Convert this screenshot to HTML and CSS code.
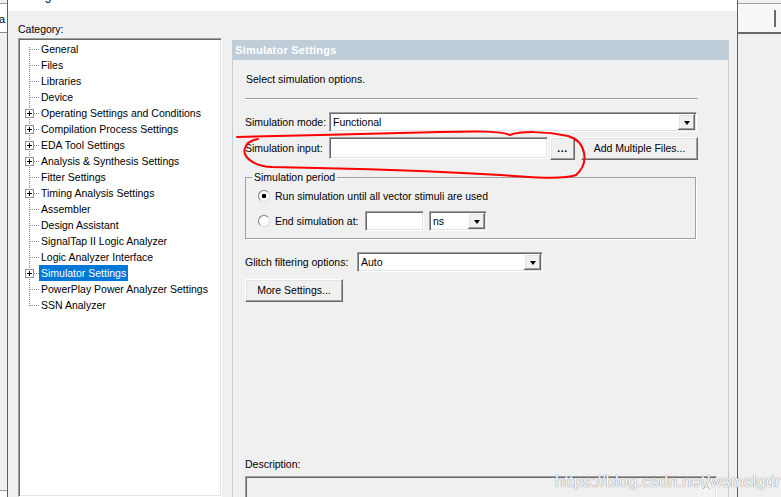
FILE: index.html
```html
<!DOCTYPE html>
<html>
<head>
<meta charset="utf-8">
<link rel="stylesheet" href="styles.css">
</head>
<body>
<div class="screen">
  <div class="edge-left">
    <div class="edge-tab">a</div>
    <div class="edge-fill"></div>
    <div class="edge-foot"></div>
  </div>
  <div class="vrule"></div>
  <div class="dialog">
    <div class="titlebar"><span class="title">Settings</span></div>
    <div class="dialog-body">
      <div class="category">
        <div class="cat-label">Category:</div>
        <ul class="tree">
          <li class="node first"><span class="gut"></span><span class="lbl">General</span></li>
          <li class="node"><span class="gut"></span><span class="lbl">Files</span></li>
          <li class="node"><span class="gut"></span><span class="lbl">Libraries</span></li>
          <li class="node"><span class="gut"></span><span class="lbl">Device</span></li>
          <li class="node"><span class="gut"><span class="plus"></span></span><span class="lbl">Operating Settings and Conditions</span></li>
          <li class="node"><span class="gut"><span class="plus"></span></span><span class="lbl">Compilation Process Settings</span></li>
          <li class="node"><span class="gut"><span class="plus"></span></span><span class="lbl">EDA Tool Settings</span></li>
          <li class="node"><span class="gut"><span class="plus"></span></span><span class="lbl">Analysis &amp; Synthesis Settings</span></li>
          <li class="node"><span class="gut"></span><span class="lbl">Fitter Settings</span></li>
          <li class="node"><span class="gut"><span class="plus"></span></span><span class="lbl">Timing Analysis Settings</span></li>
          <li class="node"><span class="gut"></span><span class="lbl">Assembler</span></li>
          <li class="node"><span class="gut"></span><span class="lbl">Design Assistant</span></li>
          <li class="node"><span class="gut"></span><span class="lbl">SignalTap II Logic Analyzer</span></li>
          <li class="node"><span class="gut"></span><span class="lbl">Logic Analyzer Interface</span></li>
          <li class="node sel"><span class="gut"><span class="plus"></span></span><span class="lbl">Simulator Settings</span></li>
          <li class="node"><span class="gut"></span><span class="lbl">PowerPlay Power Analyzer Settings</span></li>
          <li class="node last"><span class="gut"></span><span class="lbl">SSN Analyzer</span></li>
        </ul>
      </div>
      <div class="panel">
        <div class="panel-head">Simulator Settings</div>
        <div class="panel-body">
          <div class="intro">Select simulation options.</div>
          <div class="sep"></div>
          <div class="row mode-row">
            <span class="field-label">Simulation mode:</span>
            <div class="combo combo-mode"><span class="combo-text">Functional</span><span class="drop"></span></div>
          </div>
          <div class="row input-row">
            <span class="field-label">Simulation input:</span>
            <div class="textbox"></div>
            <div class="btn btn-dots">...</div>
            <div class="btn btn-add">Add Multiple Files...</div>
          </div>
          <fieldset class="period">
            <legend>Simulation period</legend>
            <div class="radio-row">
              <span class="radio checked"></span>
              <span class="radio-label">Run simulation until all vector stimuli are used</span>
            </div>
            <div class="radio-row radio-row2">
              <span class="radio"></span>
              <span class="radio-label end-label">End simulation at:</span>
              <div class="textbox small-input"></div>
              <div class="combo combo-ns"><span class="combo-text">ns</span><span class="drop"></span></div>
            </div>
          </fieldset>
          <div class="row glitch-row">
            <span class="field-label glitch-label">Glitch filtering options:</span>
            <div class="combo combo-glitch"><span class="combo-text">Auto</span><span class="drop"></span></div>
          </div>
          <div class="btn btn-more">More Settings...</div>
          <div class="desc-label">Description:</div>
          <div class="desc-box">
            <div class="desc-text"></div>
            <div class="desc-scroll">
              <svg width="9" height="6" viewBox="0 0 9 6"><path d="M1 5 L4.5 1.5 L8 5" fill="none" stroke="#a8a8a8" stroke-width="1"/></svg>
            </div>
          </div>
        </div>
      </div>
    </div>
  </div>
  <div class="vrule"></div>
  <div class="edge-right">
    <div class="er-tab"><span class="er-bar"></span></div>
    <div class="edge-fill"></div>
  </div>
  <svg class="scribble" width="781" height="497" viewBox="0 0 781 497">
    <path d="M237 137 C300 136 380 133 440 132 C480 131 500 131 510 135 C520 131 545 131 568 136 C586 141 590 163 576 175 C562 180 530 177 500 175 C420 170 330 168 272 167 C252 166 242 156 245 148 C247 142 252 140 258 139" fill="none" stroke="#ff0000" stroke-width="2" stroke-linecap="round"/>
  </svg>
  <div class="watermark">https://blog.csdn.net/wsmslgdr</div>
</div>
</body>
</html>
```
FILE: styles.css
```css
html, body {
  margin: 0;
  padding: 0;
  overflow: hidden;
}
body {
  width: 781px;
  height: 497px;
  background: #f0f0f0;
  color: #000;
  font-family: "Liberation Sans", Arial, sans-serif;
  font-size: 10.5px;
}
.screen {
  position: relative;
  display: flex;
  height: 497px;
  overflow: hidden;
}
.edge-left {
  width: 7px;
  display: flex;
  flex-direction: column;
  background: #f0f0f0;
}
.edge-tab {
  margin-top: 3px;
  height: 28px;
  line-height: 30px;
  background: #fff;
  border-top: 1px solid #a0a0a0;
  border-bottom: 1px solid #8a8a8a;
  overflow: hidden;
  text-indent: -1px;
  font-size: 11px;
}
.edge-fill {
  flex: 1;
}
.edge-foot {
  height: 6px;
  background: #fff;
  border-top: 1px solid #a0a0a0;
}
.vrule {
  width: 1px;
  background: #5e5e5e;
}
.dialog {
  width: 729px;
  display: flex;
  flex-direction: column;
}
.titlebar {
  height: 11px;
  background: #fff;
  overflow: hidden;
  padding-left: 6px;
}
.title {
  display: block;
  font-size: 12px;
  line-height: 12px;
  margin-top: -10px;
}
.dialog-body {
  flex: 1;
  display: flex;
  gap: 10px;
  padding: 12px 0 0 10px;
  min-height: 0;
}
.category {
  width: 204px;
  display: flex;
  flex-direction: column;
}
.cat-label {
  line-height: 13px;
  margin-bottom: 2px;
}
.tree {
  list-style: none;
  margin: 0;
  padding: 2px 1px 1px;
  flex: 1;
  background: #fff;
  border: 1px solid;
  border-color: #a0a0a0 #fff #fff #a0a0a0;
  box-shadow: inset 1px 1px #696969, inset -1px -1px #e3e3e3;
}
.node {
  display: flex;
  align-items: center;
  height: 16px;
}
.gut {
  width: 19px;
  height: 16px;
  flex: none;
  display: flex;
  align-items: center;
  background-image:
    repeating-linear-gradient(to bottom, #8a8a8a 0 1px, transparent 1px 2px),
    repeating-linear-gradient(to right, #8a8a8a 0 1px, transparent 1px 2px);
  background-repeat: no-repeat;
  background-position: 9px 0, 10px 8px;
  background-size: 1px 16px, 9px 1px;
}
.first .gut {
  background-position: 9px 6px, 10px 8px;
  background-size: 1px 10px, 9px 1px;
}
.last .gut {
  background-position: 9px 0, 10px 8px;
  background-size: 1px 9px, 9px 1px;
}
.plus {
  width: 7px;
  height: 7px;
  margin-left: 5px;
  border: 1px solid #919191;
  background:
    linear-gradient(#000, #000) center / 5px 1px no-repeat,
    linear-gradient(#000, #000) center / 1px 5px no-repeat,
    #fff;
}
.lbl {
  padding: 0 2px;
  line-height: 16px;
  white-space: nowrap;
}
.sel .lbl {
  background: #0078d7;
  color: #fff;
}
.panel {
  width: 497px;
  margin-top: 17px;
  display: flex;
  flex-direction: column;
}
.panel-head {
  height: 20px;
  line-height: 21px;
  background: #bfcdd9;
  color: #fff;
  font-weight: bold;
  font-size: 11px;
  letter-spacing: 0.25px;
  padding-left: 3px;
}
.panel-body {
  flex: 1;
  border: 1px solid #bfcdd9;
  border-top: 0;
  padding: 13px 0 0 12px;
}
.intro {
  line-height: 13px;
  padding-left: 1px;
}
.sep {
  width: 453px;
  height: 0;
  margin-top: 12px;
  border-top: 1px solid #a0a0a0;
  border-bottom: 1px solid #fff;
}
.row {
  display: flex;
  align-items: center;
}
.field-label {
  width: 84px;
  flex: none;
  white-space: nowrap;
}
.mode-row {
  margin-top: 12px;
  height: 20px;
}
.combo {
  display: flex;
  box-sizing: border-box;
  height: 20px;
  padding: 1px;
  background: #fff;
  border: 1px solid;
  border-color: #a0a0a0 #fff #fff #a0a0a0;
  box-shadow: inset 1px 1px #696969, inset -1px -1px #e3e3e3;
}
.combo-text {
  flex: 1;
  line-height: 16px;
  padding-left: 2px;
  white-space: nowrap;
}
.drop {
  width: 17px;
  height: 16px;
  flex: none;
  background: #f0f0f0;
  box-shadow: inset -1px -1px #696969, inset 1px 1px #fff, inset -2px -2px #a0a0a0, inset 2px 2px #e3e3e3;
  display: flex;
  align-items: center;
  justify-content: center;
}
.drop::after {
  content: "";
  width: 0;
  height: 0;
  border-left: 3.5px solid transparent;
  border-right: 3.5px solid transparent;
  border-top: 4px solid #000;
  margin-top: 1px;
}
.combo-mode {
  width: 368px;
}
.input-row {
  margin-top: 5px;
  height: 23px;
  align-items: flex-start;
}
.input-row .field-label {
  line-height: 22px;
}
.textbox {
  box-sizing: border-box;
  width: 219px;
  height: 22px;
  background: #fff;
  border: 1px solid;
  border-color: #a0a0a0 #fff #fff #a0a0a0;
  box-shadow: inset 1px 1px #696969, inset -1px -1px #e3e3e3;
}
.btn {
  box-sizing: border-box;
  height: 23px;
  line-height: 21px;
  text-align: center;
  background: #f0f0f0;
  border: 1px solid;
  border-color: #fff #696969 #696969 #fff;
  box-shadow: inset -1px -1px #a0a0a0, inset 1px 1px #e3e3e3;
  white-space: nowrap;
}
.btn-dots {
  width: 25px;
  margin-left: 2px;
  font-weight: bold;
  letter-spacing: 0.5px;
}
.btn-add {
  width: 117px;
  margin-left: 6px;
}
.period {
  box-sizing: border-box;
  width: 451px;
  margin: 11px 0 0;
  padding: 4px 0 7px 12px;
  border: 1px solid #a0a0a0;
  box-shadow: 1px 1px 0 #fff;
  min-width: 0;
}
.period legend {
  padding: 0 2px;
  margin-left: -6px;
  line-height: 13px;
}
.radio-row {
  display: flex;
  align-items: center;
  height: 16px;
}
.radio {
  box-sizing: border-box;
  width: 12px;
  height: 12px;
  flex: none;
  border-radius: 50%;
  background: #fff;
  border: 1px solid;
  border-color: #7a7a7a #dcdcdc #dcdcdc #7a7a7a;
}
.radio.checked {
  background: radial-gradient(circle at center, #000 0 2px, #fff 2.6px);
}
.radio-label {
  margin-left: 5px;
  white-space: nowrap;
}
.radio-row2 {
  margin-top: 7px;
  height: 20px;
}
.end-label {
  width: 90px;
  flex: none;
}
.small-input {
  width: 59px;
  height: 20px;
}
.combo-ns {
  width: 58px;
  margin-left: 5px;
}
.glitch-row {
  margin-top: 13px;
  height: 20px;
}
.glitch-label {
  width: 112px;
}
.combo-glitch {
  width: 186px;
}
.btn-more {
  width: 98px;
  margin-top: 7px;
}
.desc-label {
  margin-top: 156px;
  line-height: 13px;
}
.desc-box {
  box-sizing: border-box;
  display: flex;
  width: 472px;
  height: 40px;
  margin-top: 5px;
  background: #f0f0f0;
  border: 1px solid;
  border-color: #a0a0a0 #fff #fff #a0a0a0;
  box-shadow: inset 1px 1px #696969, inset -1px -1px #e3e3e3;
}
.desc-text {
  flex: 1;
}
.desc-scroll {
  width: 17px;
  flex: none;
  margin: 1px 1px 0 0;
  display: flex;
  justify-content: center;
  padding-top: 6px;
  background: #f3f3f3;
}
.edge-right {
  flex: 1;
  display: flex;
  flex-direction: column;
}
.er-tab {
  margin-top: 3px;
  height: 28px;
  display: flex;
  align-items: center;
  background: #f7f7f7;
  border-top: 1px solid #a0a0a0;
  border-bottom: 2px solid #6a6a6a;
}
.er-bar {
  width: 2px;
  height: 17px;
  margin-left: 36px;
  background: #6a6a6a;
}
.scribble {
  position: absolute;
  left: 0;
  top: 0;
  pointer-events: none;
}
.watermark {
  position: absolute;
  left: 555px;
  top: 472px;
  font-size: 16px;
  line-height: 20px;
  letter-spacing: 0.35px;
  color: #fbfbfb;
  text-shadow: 0 0 1px #8c8c8c, 0 0 1px #8c8c8c;
  white-space: nowrap;
  pointer-events: none;
}
```
